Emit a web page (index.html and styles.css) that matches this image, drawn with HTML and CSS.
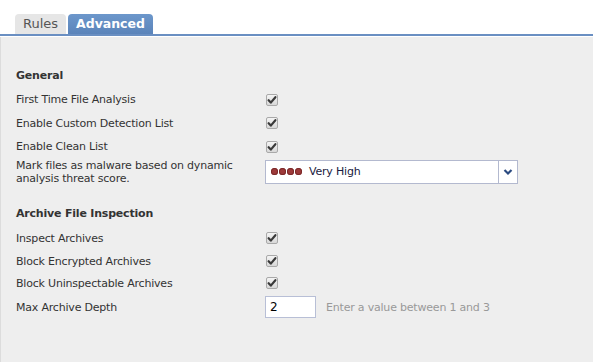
FILE: index.html
```html
<!DOCTYPE html>
<html>
<head>
<meta charset="utf-8">
<link rel="stylesheet" href="styles.css">
</head>
<body>
<div class="tabs">
  <div class="tab">Rules</div>
  <div class="tab active">Advanced</div>
</div>
<div class="panel">
  <div class="section-title">General</div>
  <div class="row"><div class="label">First Time File Analysis</div><div class="ctrl"><span class="cb"><svg viewBox="0 0 12 12" width="12" height="12"><path d="M2.6 6.2 L4.8 8.6 L9.4 3.2" fill="none" stroke="#3a3a3a" stroke-width="2.2" stroke-linecap="round" stroke-linejoin="round"/></svg></span></div></div>
  <div class="row"><div class="label">Enable Custom Detection List</div><div class="ctrl"><span class="cb"><svg viewBox="0 0 12 12" width="12" height="12"><path d="M2.6 6.2 L4.8 8.6 L9.4 3.2" fill="none" stroke="#3a3a3a" stroke-width="2.2" stroke-linecap="round" stroke-linejoin="round"/></svg></span></div></div>
  <div class="row"><div class="label">Enable Clean List</div><div class="ctrl"><span class="cb"><svg viewBox="0 0 12 12" width="12" height="12"><path d="M2.6 6.2 L4.8 8.6 L9.4 3.2" fill="none" stroke="#3a3a3a" stroke-width="2.2" stroke-linecap="round" stroke-linejoin="round"/></svg></span></div></div>
  <div class="row tall"><div class="label">Mark files as malware based on dynamic analysis threat score.</div><div class="ctrl">
    <div class="select">
      <div class="sel-value"><span class="dots"><i></i><i></i><i></i><i></i></span><span class="sel-text">Very High</span></div>
      <div class="sel-arrow"><svg viewBox="0 0 10 8" width="10" height="8"><path d="M1.5 2 L5 5.5 L8.5 2" fill="none" stroke="#2b4a80" stroke-width="2.2"/></svg></div>
    </div>
  </div></div>

  <div class="section-title second">Archive File Inspection</div>
  <div class="row r23"><div class="label">Inspect Archives</div><div class="ctrl"><span class="cb"><svg viewBox="0 0 12 12" width="12" height="12"><path d="M2.6 6.2 L4.8 8.6 L9.4 3.2" fill="none" stroke="#3a3a3a" stroke-width="2.2" stroke-linecap="round" stroke-linejoin="round"/></svg></span></div></div>
  <div class="row r23"><div class="label">Block Encrypted Archives</div><div class="ctrl"><span class="cb"><svg viewBox="0 0 12 12" width="12" height="12"><path d="M2.6 6.2 L4.8 8.6 L9.4 3.2" fill="none" stroke="#3a3a3a" stroke-width="2.2" stroke-linecap="round" stroke-linejoin="round"/></svg></span></div></div>
  <div class="row short"><div class="label">Block Uninspectable Archives</div><div class="ctrl"><span class="cb"><svg viewBox="0 0 12 12" width="12" height="12"><path d="M2.6 6.2 L4.8 8.6 L9.4 3.2" fill="none" stroke="#3a3a3a" stroke-width="2.2" stroke-linecap="round" stroke-linejoin="round"/></svg></span></div></div>
  <div class="row input-row"><div class="label">Max Archive Depth</div><div class="ctrl">
    <div class="input">2</div>
    <span class="hint">Enter a value between 1 and 3</span>
  </div></div>
</div>
</body>
</html>
```
FILE: styles.css
```css
html, body {
  margin: 0;
  padding: 0;
  height: 100%;
  background: #ffffff;
}
body {
  font-family: "DejaVu Sans", Verdana, sans-serif;
  font-size: 11px;
  letter-spacing: -0.2px;
  color: #333333;
  display: flex;
  flex-direction: column;
}
.tabs {
  display: flex;
  gap: 2px;
  padding: 14px 0 0 15px;
  border-bottom: 2px solid #6a8fc2;
  height: 20px;
}
.tab {
  width: 51px;
  height: 20px;
  box-sizing: border-box;
  background: #e6e6e6;
  border-radius: 4px 4px 0 0;
  color: #555555;
  font-size: 13px;
  letter-spacing: 0;
  line-height: 20px;
  text-align: center;
}
.tab.active {
  width: 85px;
  background: linear-gradient(#6c97cb, #5b84ba);
  color: #ffffff;
  font-weight: bold;
  font-size: 12.5px;
}
.panel {
  flex: 1;
  margin-top: 1px;
  background: #eeeeee;
  border-left: 1px solid #dcdcdc;
  padding: 31px 0 0 15px;
}
.section-title {
  font-weight: bold;
  height: 16px;
  line-height: 16px;
  margin-bottom: 4px;
}
.section-title.second {
  margin-top: 21px;
  margin-bottom: 5px;
}
.row {
  display: grid;
  grid-template-columns: 249px 1fr;
  align-items: center;
  height: 23.5px;
}
.row.r23 { height: 23px; }
.row.short { height: 21px; }
.row.tall { height: 26px; }
.row.input-row { height: 27px; }
.label {
  line-height: 13px;
  padding-right: 10px;
}
.ctrl {
  display: flex;
  align-items: center;
}
.cb {
  width: 12px;
  height: 12px;
  box-sizing: border-box;
  border: 1px solid #a9a9a9;
  border-radius: 2px;
  background: linear-gradient(#f4f4f4, #d8d8d8);
  margin-left: 1px;
  display: flex;
  align-items: center;
  justify-content: center;
  overflow: hidden;
}
.cb svg { display: block; flex: none; }
.select {
  width: 253px;
  height: 24px;
  box-sizing: border-box;
  border: 1px solid #b3b9cf;
  background: #ffffff;
  display: flex;
}
.sel-value {
  flex: 1;
  display: flex;
  align-items: center;
  padding-left: 5px;
}
.dots { display: flex; gap: 1px; margin-right: 7px; }
.dots i {
  width: 7px;
  height: 7px;
  border-radius: 50%;
  background: #9e3a3a;
  box-shadow: inset 0 0 0 1px #7a2a2a;
}
.sel-text {
  color: #1a1a40;
  font-size: 11px;
}
.sel-arrow {
  width: 18px;
  border-left: 1px solid #b3b9cf;
  display: flex;
  align-items: center;
  justify-content: center;
}
.input {
  width: 51px;
  height: 22px;
  box-sizing: border-box;
  border: 1px solid #b8bfd6;
  background: #ffffff;
  color: #000000;
  padding-left: 4px;
  line-height: 20px;
  font-size: 12px;
}
.hint {
  color: #999999;
  margin-left: 10px;
}
```
